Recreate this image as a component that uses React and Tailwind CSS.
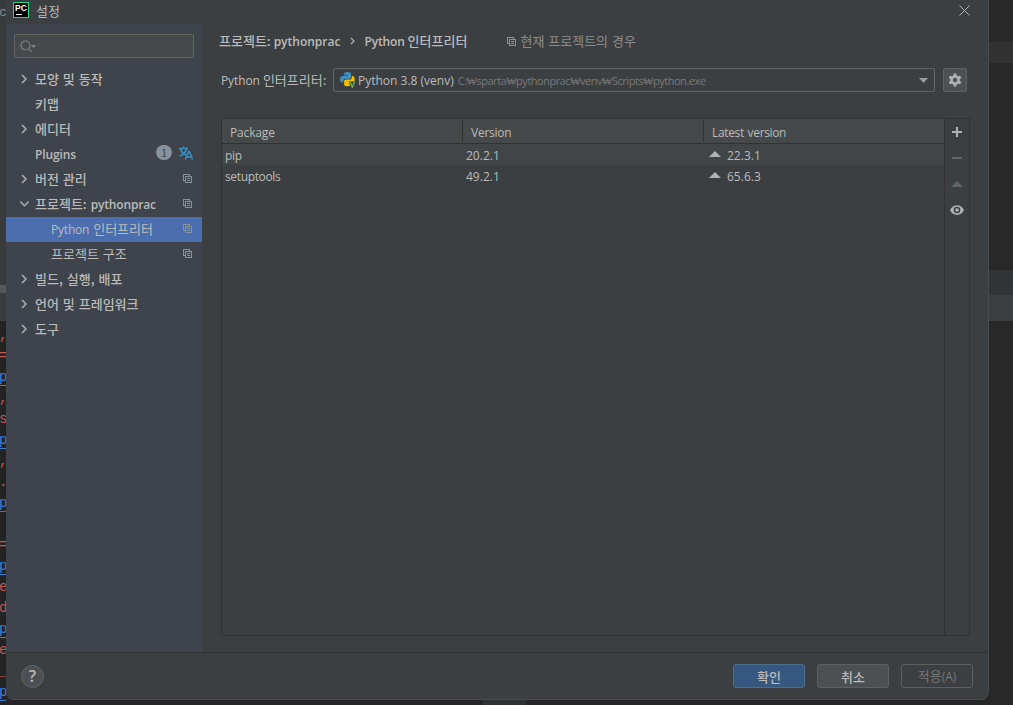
import React from 'react';

const navItems = [
    { label: '모양 및 동작', arrow: 'right' },
    { label: '키맵' },
    { label: '에디터', arrow: 'right' },
    { label: 'Plugins', latin: true, plugins: true },
    { label: '버전 관리', arrow: 'right', copy: true },
    { label: '프로젝트: ', suffix: 'pythonprac', arrow: 'down', copy: true },
    { prefix: 'Python ', label: '인터프리터', child: true, copy: true, selected: true },
    { label: '프로젝트 구조', child: true, copy: true },
    { label: '빌드, 실행, 배포', arrow: 'right' },
    { label: '언어 및 프레임워크', arrow: 'right' },
    { label: '도구', arrow: 'right' },
];

const packages = [
    { name: 'pip', version: '20.2.1', latest: '22.3.1' },
    { name: 'setuptools', version: '49.2.1', latest: '65.6.3' },
];

const codeLines = [
    { ch: ',', pad: true },
    { ch: '=' },
    { ch: 'p', link: true },
    { ch: ',', pad: true },
    { ch: 's' },
    { ch: 'p', link: true },
    { ch: ',', pad: true },
    { ch: '.', pad: true },
    { ch: 'p', link: true },
    { ch: '' },
    { ch: '=' },
    { ch: 'p', link: true },
    { ch: 'e' },
    { ch: 'd' },
    { ch: 'p', link: true },
    { ch: 'e' },
    { ch: '_' },
    { ch: 'p', link: true },
];

function Latin({ children, size = 'text-[12px]', className = '' }) {
    return <span className={`font-['Open_Sans'] ${size} ${className}`}>{children}</span>;
}

function Chevron({ dir }) {
    if (!dir) return <span className="w-[10px]" />;
    return (
        <svg width="10" height="10" viewBox="0 0 10 10" fill="none" stroke="#adafb1" strokeWidth="1.500">
            {dir === 'right' ? <path d="M3 1l4 4-4 4" /> : <path d="M1.300 2.500L5.500 6.700 9.700 2.500" />}
        </svg>
    );
}

function CopyIcon() {
    return (
        <svg width="9" height="9" viewBox="0 0 9 9" fill="none" stroke="#87939a" shapeRendering="crispEdges">
            <path d="M2 6.500H.5V.5h6V2" />
            <path d="M2.500 2.500h6v6h-6zM4 4.500h3M4 6.500h3" />
        </svg>
    );
}

function TranslateIcon() {
    return (
        <svg width="14" height="14" viewBox="0 0 14 14" fill="none" stroke="#3592c4" strokeWidth="1.600">
            <path d="M0 2.500h9M4.500.5v2M1.500 3c.8 2.800 3 5 5.500 6M7.500 3C6.500 6.300 4 8.800.6 10.200" />
            <path d="M6.300 13.500l3.200-8h.8l3.200 8M7.500 11h5" />
        </svg>
    );
}

function PythonIcon() {
    return (
        <svg width="16" height="16" viewBox="0 0 16 16">
            <path fill="#3e93c3" d="M7 0C5 0 4 .8 4 2v1.500h4V4H2.500C1 4 0 5.200 0 7.300S1 10.500 2.200 10.500H3.300V9c0-1.300 1-2.200 2.200-2.200h3.600c1.100 0 1.900-.8 1.900-1.900V2c0-1.200-1-2-4-2z" />
            <circle cx="5.600" cy="1.900" r=".65" fill="#3c3f41" />
            <path fill="#f4bd00" d="M11.800 4v1.400c0 1.300-1 2.200-2.200 2.200H6c-1.100 0-1.900.8-1.900 1.900v2.700c0 1.400 1.300 2 3.500 2 1.100 0 2-.2 2.600-.6L8.600 9.500h5.900c.2-.7.200-1.400.2-2C14.600 5.200 13.900 4 12.800 4z" />
            <path fill="none" stroke="#62b543" strokeWidth="1.500" d="M10 10l2.300 5L14.600 10" />
        </svg>
    );
}

function UpArrow() {
    return (
        <svg width="12" height="6" viewBox="0 0 12 6">
            <path d="M0 6l6-6 6 6z" fill="#afb1b3" />
        </svg>
    );
}

function GearIcon() {
    return (
        <svg width="14" height="14" viewBox="0 0 14 14">
            <g fill="#afb1b3">
                <circle cx="7" cy="7" r="4.800" />
                <rect x="5.500" y=".5" width="3" height="13" />
                <rect x="5.500" y=".5" width="3" height="13" transform="rotate(60 7 7)" />
                <rect x="5.500" y=".5" width="3" height="13" transform="rotate(120 7 7)" />
            </g>
            <circle cx="7" cy="7" r="2.200" fill="#4c5052" />
        </svg>
    );
}

function Sidebar() {
    return (
        <aside className="w-[196px] shrink-0 bg-[#3e434c]">
            <div className="mx-2 mt-[10px] flex h-6 w-[180px] items-center rounded-[2px] border border-[#646464] bg-[#45494a] pl-[5px]">
                <svg width="17" height="13" viewBox="0 0 17 13" fill="none" stroke="#7c868d" strokeWidth="1.200">
                    <circle cx="5.500" cy="5.500" r="4.500" />
                    <path d="M8.800 8.800l3 3" />
                    <path d="M11 5h5l-2.500 3z" fill="#7c868d" stroke="none" />
                </svg>
            </div>
            <nav className="mt-[9px] font-medium [word-spacing:1px]">
                {navItems.map((item) => (
                    <div
                        key={item.label}
                        className={`flex h-[25px] items-center pb-[2px] pr-[10px] ${item.child ? 'pl-[45px] font-normal' : 'pl-[13px]'} ${item.selected ? 'bg-[#4b6eaf]' : ''}`}
                    >
                        {!item.child && <Chevron dir={item.arrow} />}
                        <span className={`whitespace-pre ${item.child ? '' : 'ml-[6px]'}`}>
                            {item.prefix && <Latin className="tracking-[-0.2px]">{item.prefix}</Latin>}
                            {item.latin ? <Latin className="font-semibold tracking-[-0.1px]">{item.label}</Latin> : item.label}
                            {item.suffix && <Latin className="font-semibold tracking-[-0.15px]">{item.suffix}</Latin>}
                        </span>
                        {item.copy && <span className="ml-auto"><CopyIcon /></span>}
                        {item.plugins && (
                            <span className="-mt-[2px] -mr-px ml-auto flex items-center gap-[7px]">
                                <span className="flex h-[15px] w-4 items-center justify-center rounded-full bg-[#87939a] text-[11px] font-normal text-[#3e434c]">1</span>
                                <TranslateIcon />
                            </span>
                        )}
                    </div>
                ))}
            </nav>
        </aside>
    );
}

function PackageTable() {
    return (
        <div className="ml-[19px] flex h-[518px] w-[749px] border border-[#323232]">
            <div className="w-[722px]">
                <div className="flex h-[25px] items-center border-b border-[#323232] bg-[#45494a]">
                    <div className="flex h-[22px] w-[241px] items-center border-r border-[#323232] pl-2 pt-[3px]"><Latin className="tracking-[-0.15px]">Package</Latin></div>
                    <div className="flex h-[22px] w-[241px] items-center border-r border-[#323232] pl-2 pt-[3px]"><Latin className="tracking-[-0.25px]">Version</Latin></div>
                    <div className="flex h-[22px] items-center pl-2 pt-[3px]"><Latin className="tracking-[-0.35px] [word-spacing:1px]">Latest version</Latin></div>
                </div>
                {packages.map((p) => (
                    <div key={p.name} className="flex h-[21px] items-center pt-[2px] odd:bg-[#3c3f41] even:bg-[#414547]">
                        <div className="flex w-[241px] pl-[3px]"><Latin className="tracking-[-0.35px]">{p.name}</Latin></div>
                        <div className="flex w-[241px] pl-[3px]"><Latin>{p.version}</Latin></div>
                        <div className="flex items-center gap-[6px] pl-[5px]">
                            <span className="-mt-[3px]"><UpArrow /></span>
                            <Latin>{p.latest}</Latin>
                        </div>
                    </div>
                ))}
            </div>
            <div className="flex w-[25px] flex-col items-center border-l border-[#323232]">
                <svg width="24" height="104" viewBox="0 0 24 104" fill="none">
                    <path d="M7 13h10M12 8v10" stroke="#afb1b3" strokeWidth="2" />
                    <path d="M7 39h10" stroke="#616365" strokeWidth="2" />
                    <path d="M6 68l6-6 6 6z" fill="#616365" />
                    <path d="M5 91c3-6.500 11-6.500 14 0-3 6.500-11 6.500-14 0z" fill="#afb1b3" />
                    <circle cx="12" cy="91" r="3.300" fill="#3c3f41" />
                    <circle cx="12" cy="91" r="1.800" fill="#afb1b3" />
                </svg>
            </div>
        </div>
    );
}

function Content() {
    return (
        <main className="flex-1">
            <div className="flex h-[34px] items-center whitespace-pre pl-[17px] font-medium">
                <span className="pb-[2px]">프로젝트: </span>
                <Latin className="pt-px font-semibold">pythonprac</Latin>
                <svg className="ml-[10px] mr-[9px]" width="5" height="8" viewBox="0 0 5 8" fill="none" stroke="#afb1b3" strokeWidth="1.200">
                    <path d="M1 1l3 3-3 3" />
                </svg>
                <Latin className="pt-px font-semibold tracking-[-0.15px]">{'Python '}</Latin>
                <span className="pb-[2px]">인터프리터</span>
                <span className="ml-10 mr-1"><CopyIcon /></span>
                <span className="pb-[2px] font-normal text-[#8c8c8c] [word-spacing:1px]">현재 프로젝트의 경우</span>
            </div>
            <div className="mt-[10px] flex h-6 items-center pl-[19px]">
                <span className="w-[112px] whitespace-pre"><Latin className="tracking-[-0.1px]">{'Python '}</Latin>인터프리터:</span>
                <div className="flex h-6 w-[602px] items-center whitespace-nowrap rounded-[2px] border border-[#646464] pl-[6px] pr-[6px]">
                    <PythonIcon />
                    <Latin className="ml-[2px] pt-px">Python 3.8 (venv)</Latin>
                    <Latin size="text-[11px]" className="ml-1 tracking-[-0.48px] text-[#787878]">C:₩sparta₩pythonprac₩venv₩Scripts₩python.exe</Latin>
                    <svg className="ml-auto" width="9" height="5" viewBox="0 0 9 5"><path d="M0 0h9L4.500 5z" fill="#9a9da0" /></svg>
                </div>
                <button className="ml-2 flex size-6 items-center justify-center rounded-[2px] border border-[#5e6060] bg-[#4c5052]"><GearIcon /></button>
            </div>
            <div className="h-[26px]" />
            <PackageTable />
        </main>
    );
}

export default function App() {
    return (
        <div className="flex h-[705px] w-[1013px] overflow-hidden bg-[#262626] font-['Noto_Sans_CJK_KR',sans-serif] text-[13px] leading-none text-[#bbbbbb]">
            <div className="w-[6px] shrink-0 overflow-hidden bg-[#2b2b2b] font-['Liberation_Mono',monospace] text-[14px]">
                <div className="h-[285px] bg-[#383a3b] pt-[6px] text-[13px] text-[#8a8a8a]"><span className="-ml-px">c</span></div>
                <div className="h-2 bg-[#555759]" />
                <div className="h-[28px] bg-[#3a3c3e]" />
                <div className="h-[384px] bg-[#232323] pt-[3px]">
                    {codeLines.map((line, i) => (
                        <div key={i} className={`flex h-[21px] items-center ${line.link ? 'text-[#3f7fc9] underline underline-offset-4' : 'text-[#c75450]'}`}>
                            <span className="-ml-px">{line.ch}</span>
                        </div>
                    ))}
                </div>
            </div>
            <div className="flex w-[983px] shrink-0 flex-col">
                <div className="flex h-[700px] shrink-0 flex-col rounded-b-lg border-r border-b border-[#4a4c4e] bg-[#3c3f41]">
                    <header className="flex h-6 shrink-0 items-center pl-[7px] pr-[18px]">
                        <span className="-mt-1 flex size-4 flex-col border border-[#21d789] bg-black pl-px pt-[2px] text-white">
                            <span className="font-['Liberation_Sans'] text-[8.5px] font-bold leading-[7px]">PC</span>
                            <span className="ml-px mt-[2px] h-px w-[6px] bg-white" />
                        </span>
                        <span className="-mt-[4px] ml-[7px]">설정</span>
                        <svg className="-mt-1 ml-auto" width="11" height="11" viewBox="0 0 11 11" stroke="#afb1b3"><path d="M.5.5l10 10M10.500.5l-10 10" /></svg>
                    </header>
                    <div className="flex h-[628px] shrink-0">
                        <Sidebar />
                        <Content />
                    </div>
                    <footer className="flex h-[47px] items-center border-t border-[#323232] pl-[15px] pr-[15px]">
                        <span className="flex size-[23px] items-center justify-center rounded-full border border-[#606366] bg-[#4c5052] font-['Open_Sans'] text-[16px] font-semibold">?</span>
                        <div className="ml-auto flex gap-3">
                            <button className="h-6 w-[72px] rounded-[3px] border border-[#4c708c] bg-[#365880] font-medium">확인</button>
                            <button className="h-6 w-[72px] rounded-[3px] border border-[#5e6060] bg-[#4c5052] font-medium">취소</button>
                            <button className="h-6 w-[72px] rounded-[3px] border border-[#5e6060] text-[#777777]">적용<Latin>(A)</Latin></button>
                        </div>
                    </footer>
                </div>
                <div className="ml-[477px] h-[5px] w-[43px] bg-[#2f3133]" />
            </div>
            <div className="flex-1 bg-[#282828]">
                <div className="h-[42px]" />
                <div className="h-[21px] bg-[#323232]" />
                <div className="h-[207px]" />
                <div className="h-[25px] bg-[#323335]" />
                <div className="h-[26px] bg-[#3c3f41]" />
            </div>
        </div>
    );
}
